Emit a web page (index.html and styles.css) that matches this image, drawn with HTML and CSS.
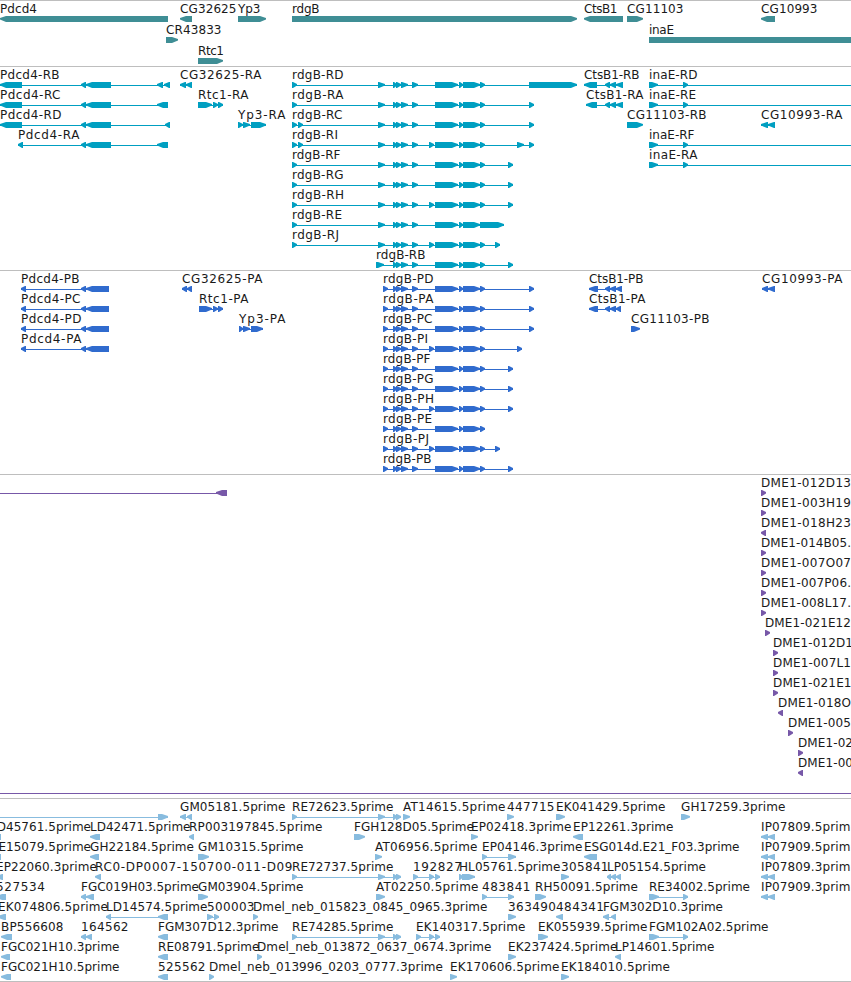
FILE: index.html
```html
<!DOCTYPE HTML>
<html>

<head>
	<title>Genome Tracks</title>
	<meta http-equiv="Content-Type" content="text/html; charset=UTF-8">
	<link rel="stylesheet" href="styles.css">
</head>

<body>

	<div class="browser">
		<svg class="track genes" id="genes"></svg>
		<svg class="track transcripts" id="transcripts"></svg>
		<svg class="track proteins" id="proteins"></svg>
		<svg class="track clones" id="clones"></svg>
		<svg class="track ests" id="ests"></svg>
	</div>

	<script type="text/javascript" src="tracks.js"></script>

</body>

</html>
```

FILE: styles.css
```css
body {
	margin: 0;
	background-color: white;
	overflow: hidden;
}

.browser {
	display: flex;
	flex-direction: column;
	width: 851px;
	border-bottom: 1px solid #bebebe;
}

.track {
	display: block;
	box-sizing: border-box;
	width: 100%;
	border-top: 1px solid #bebebe;
	overflow: hidden;
}

.genes { height: 66px; color: #3f8e95; }
.transcripts { height: 204px; color: #009fc1; }
.proteins { height: 204px; color: #306bce; }
.clones { height: 324px; color: #7758a8; }
.ests { height: 183px; color: #88bcdf; }

.label {
	font-family: "DejaVu Sans", sans-serif;
	font-size: 12px;
	fill: #1a1a1a;
}

.exon { fill: currentColor; }

.intron {
	fill: currentColor;
	shape-rendering: crispEdges;
}
```

FILE: tracks.js
```js
var SVG = 'http://www.w3.org/2000/svg';
var HEAD = 6;

function AddShape(svg, name, cls, attrs) {
	var el = document.createElementNS(SVG, name);
	el.setAttribute('class', cls);
	for (var key in attrs) el.setAttribute(key, attrs[key]);
	svg.appendChild(el);
	return el;
}

// box with an arrow head on the strand side
function DrawExon(svg, start, end, y, strand) {
	var head = Math.min(HEAD, end - start - 1);
	var from = strand == '+' ? start : end;
	var tip = strand == '+' ? end : start;
	var neck = strand == '+' ? end - head : start + head;
	AddShape(svg, 'polygon', 'exon', {
		points: [from, y, neck, y, tip, y + 2, tip, y + 3.6, neck, y + 6, from, y + 6].join(' ')
	});
}

// item: row, label, label end, strand, exons, [intron start, intron end]
// the label starts where the first exon does
function DrawTrack(id, pitch, items) {
	var svg = document.getElementById(id);
	items.forEach(function (item) {
		var top = item[0] * pitch - 1;
		var exons = item[4];
		var span = item[5] || (exons.length > 1 ? [exons[0][0], exons[exons.length - 1][1]] : null);
		if (span) {
			AddShape(svg, 'rect', 'intron', { x: span[0], y: top + 19, width: span[1] - span[0], height: 1 });
		}
		exons.forEach(function (e) {
			DrawExon(svg, e[0], e[1], top + 16, item[3]);
		});
		if (item[1]) {
			AddShape(svg, 'text', 'label', {
				x: exons[0][0], y: top + 13, textLength: item[2] - exons[0][0]
			}).textContent = item[1];
		}
	});
}

DrawTrack('genes', 21, [
	[0, 'Pdcd4', 37, '-', [[0, 168]]],
	[0, 'CG32625', 236.5, '-', [[180, 192]]],
	[0, 'Yp3', 260.5, '+', [[238, 266]]],
	[0, 'rdgB', 319.5, '+', [[292, 577]]],
	[0, 'CtsB1', 617.5, '-', [[584, 623]]],
	[0, 'CG11103', 683.5, '+', [[627, 643]]],
	[0, 'CG10993', 817.5, '-', [[761, 775]]],
	[1, 'CR43833', 221.5, '+', [[166, 178]]],
	[1, 'inaE', 674, '+', [[649, 900]]],
	[2, 'Rtc1', 224, '+', [[198, 223]]]
]);

var mid = [[393, 397], [396, 401], [401, 408], [412, 418]];
var core = [[435, 458], [459, 463], [463, 480]];
var tail = [[480, 485]];
var alt = [[429, 434]];
var utr = [[292, 297]];
var utr2 = [[298, 303]];
var lead = [[378, 385]].concat(mid);
var cds = [[383, 388]].concat(mid);

DrawTrack('transcripts', 20, [
	[0, 'Pdcd4-RB', 59.5, '-', [[0, 22], [81, 86], [86, 111], [157, 163], [164, 170]]],
	[1, 'Pdcd4-RC', 60.5, '-', [[0, 22], [81, 86], [86, 111], [157, 168]]],
	[2, 'Pdcd4-RD', 61.5, '-', [[0, 22], [81, 86], [86, 111], [165, 170]]],
	[3, 'Pdcd4-RA', 79.5, '-', [[18, 23], [81, 86], [86, 111], [157, 168]]],
	[0, 'CG32625-RA', 261.5, '-', [[180, 186], [186, 192]]],
	[1, 'Rtc1-RA', 248.5, '+', [[198, 212], [213, 218], [218, 223]]],
	[2, 'Yp3-RA', 285.5, '+', [[238, 243], [243, 250], [251, 266]]],
	[0, 'rdgB-RD', 343.5, '+', utr.concat(lead, core, tail, [[529, 577]])],
	[1, 'rdgB-RA', 343.5, '+', utr.concat(lead, core, tail, [[529, 534]])],
	[2, 'rdgB-RC', 342.5, '+', utr.concat(utr2, lead, core, tail, [[529, 534]])],
	[3, 'rdgB-RI', 338, '+', utr.concat(utr2, lead, alt, core, tail, [[517, 524], [529, 534]])],
	[4, 'rdgB-RF', 340.5, '+', utr.concat(lead, core, tail, [[508, 513]])],
	[5, 'rdgB-RG', 343.5, '+', utr.concat(lead, core, tail, [[508, 513]])],
	[6, 'rdgB-RH', 344, '+', utr.concat(lead, alt, core, tail, [[508, 513]])],
	[7, 'rdgB-RE', 342, '+', utr.concat(lead, core, [[480, 504]])],
	[8, 'rdgB-RJ', 339, '+', utr.concat(lead, alt, core, tail, [[495, 500]])],
	[9, 'rdgB-RB', 425.5, '+', [[376, 384]].concat(mid, core, tail, [[508, 513]])],
	[0, 'CtsB1-RB', 639.5, '-', [[584, 597], [605, 610], [610, 616], [616, 623]]],
	[1, 'CtsB1-RA', 643.5, '-', [[586, 597], [605, 610], [610, 616], [616, 623]]],
	[0, 'inaE-RD', 697.5, '+', [[649, 658], [683, 688]], [649, 851]],
	[1, 'inaE-RE', 696, '+', [[649, 658], [683, 688]], [649, 851]],
	[3, 'inaE-RF', 694.5, '+', [[649, 658], [683, 688]], [649, 851]],
	[4, 'inaE-RA', 697.5, '+', [[649, 658], [683, 688]], [649, 851]],
	[2, 'CG11103-RB', 706.5, '+', [[627, 643]]],
	[2, 'CG10993-RA', 842.5, '-', [[761, 768], [768, 775]]]
]);

DrawTrack('proteins', 20, [
	[0, 'Pdcd4-PB', 79.5, '-', [[21, 26], [81, 86], [86, 109]]],
	[1, 'Pdcd4-PC', 80.5, '-', [[21, 26], [81, 86], [86, 109]]],
	[2, 'Pdcd4-PD', 81.5, '-', [[21, 26], [81, 86], [86, 109]]],
	[3, 'Pdcd4-PA', 81.5, '-', [[21, 26], [81, 86], [86, 109]]],
	[0, 'CG32625-PA', 262.5, '-', [[182, 187], [187, 192]]],
	[1, 'Rtc1-PA', 248.5, '+', [[199, 212], [213, 218], [218, 223]]],
	[2, 'Yp3-PA', 285.5, '+', [[239, 243], [243, 250], [251, 263]]],
	[0, 'rdgB-PD', 433.5, '+', cds.concat(core, tail, [[529, 534]])],
	[1, 'rdgB-PA', 433.5, '+', cds.concat(core, tail, [[529, 534]])],
	[2, 'rdgB-PC', 432.5, '+', cds.concat(core, tail, [[529, 534]])],
	[3, 'rdgB-PI', 428, '+', cds.concat(alt, core, tail, [[517, 522]])],
	[4, 'rdgB-PF', 430.5, '+', cds.concat(core, tail, [[508, 513]])],
	[5, 'rdgB-PG', 433.5, '+', cds.concat(core, tail, [[508, 513]])],
	[6, 'rdgB-PH', 434, '+', cds.concat(alt, core, tail, [[508, 513]])],
	[7, 'rdgB-PE', 432, '+', cds.concat(core, tail)],
	[8, 'rdgB-PJ', 429, '+', cds.concat(alt, core, tail, [[495, 500]])],
	[9, 'rdgB-PB', 431.5, '+', cds.concat(core, tail, [[508, 513]])],
	[0, 'CtsB1-PB', 643.5, '-', [[589, 598], [605, 610], [610, 616], [616, 622]]],
	[1, 'CtsB1-PA', 645.5, '-', [[589, 598], [605, 610], [610, 616], [616, 621]]],
	[2, 'CG11103-PB', 709.5, '+', [[631, 640]]],
	[0, 'CG10993-PA', 842.5, '-', [[762, 768], [768, 775]]]
]);

DrawTrack('clones', 20, [
	[0, '', 0, '-', [[216, 227]], [0, 227]],
	[0, 'DME1-012D13', 851, '+', [[761, 766]]],
	[1, 'DME1-003H19', 851, '+', [[761, 766]]],
	[2, 'DME1-018H23', 851, '-', [[761, 766]]],
	[3, 'DME1-014B05.', 851, '+', [[761, 766]]],
	[4, 'DME1-007O07', 851, '+', [[761, 766]]],
	[5, 'DME1-007P06.', 851, '+', [[761, 766]]],
	[6, 'DME1-008L17.', 851, '+', [[761, 766]]],
	[7, 'DME1-021E12', 851, '+', [[765, 770]]],
	[8, 'DME1-012D1', 853, '+', [[773, 778]]],
	[9, 'DME1-007L1', 851, '+', [[773, 778]]],
	[10, 'DME1-021E1', 851.5, '+', [[773, 778]]],
	[11, 'DME1-018O', 851, '-', [[778, 783]]],
	[12, 'DME1-005', 851, '+', [[788, 793]]],
	[13, 'DME1-02', 853, '+', [[798, 803]]],
	[14, 'DME1-00', 853, '-', [[798, 803]]],
	[15, '', 0, '+', [], [0, 851]]
]);

DrawTrack('ests', 20, [
	[0, '', 0, '+', [[158, 168]], [0, 168]],
	[0, 'GM05181.5prime', 285.5, '-', [[180, 186], [187, 192]]],
	[0, 'RE72623.5prime', 393.5, '+', [[292, 297], [378, 385], [393, 397], [396, 401]]],
	[0, 'AT14615.5prime', 505.5, '+', [[403, 410]]],
	[0, '447715', 554.5, '+', [[507, 514]]],
	[0, 'EK041429.5prime', 665.5, '+', [[556, 565]]],
	[0, 'GH17259.3prime', 785.5, '+', [[681, 690]]],
	[1, 'LD45761.5prime', 91, '-', [[-10, 1]]],
	[1, 'LD42471.5prime', 190.5, '-', [[90, 100]]],
	[1, 'RP003197845.5prime', 322.5, '-', [[189, 194]]],
	[1, 'FGH128D05.5prime', 474, '+', [[354, 365]]],
	[1, 'EP02418.3prime', 571.5, '+', [[471, 478]]],
	[1, 'EP12261.3prime', 673.5, '-', [[573, 583]]],
	[1, 'IP07809.5prim', 850.5, '-', [[761, 768], [768, 775]]],
	[2, 'RE15079.5prime', 91, '-', [[-10, 1]]],
	[2, 'GH22184.5prime', 194, '-', [[90, 99]]],
	[2, 'GM10315.5prime', 303.5, '+', [[198, 209]]],
	[2, 'AT06956.5prime', 477.5, '+', [[375, 382]]],
	[2, 'EP04146.3prime', 582.5, '+', [[482, 487], [508, 516]]],
	[2, 'ESG014d.E21_F03.3prime', 739.5, '-', [[584, 597]]],
	[2, 'IP07909.5prim', 850.5, '-', [[761, 768], [768, 775]]],
	[3, 'EP22060.3prime', 97, '-', [[-4, 3]]],
	[3, 'RC0-DP0007-150700-011-D09', 292.5, '-', [[95, 101]]],
	[3, 'RE72737.5prime', 393.5, '+', [[292, 297], [378, 385], [393, 397], [396, 401]]],
	[3, '192827', 462, '+', [[413, 418], [429, 434], [435, 440]]],
	[3, 'HL05761.5prime', 560.5, '+', [[459, 463], [462, 475]]],
	[3, '305841', 608.5, '+', [[561, 569]]],
	[3, 'LP05154.5prime', 706, '-', [[607, 611], [611, 616], [616, 621]]],
	[3, 'IP07809.3prim', 850.5, '-', [[761, 768], [768, 775]]],
	[4, '527534', 45, '-', [[-4, 6]]],
	[4, 'FGC019H03.5prime', 199, '-', [[81, 86], [86, 94]]],
	[4, 'GM03904.5prime', 303.5, '+', [[198, 208]]],
	[4, 'AT02250.5prime', 478.5, '+', [[376, 385]]],
	[4, '483841', 530.5, '+', [[482, 487], [508, 514]]],
	[4, 'RH50091.5prime', 638, '+', [[535, 546]]],
	[4, 'RE34002.5prime', 750, '+', [[649, 659], [683, 688]]],
	[4, 'IP07909.3prim', 850.5, '-', [[761, 768], [768, 775]]],
	[5, 'EK074806.5prime', 108, '-', [[-2, 6]]],
	[5, 'LD14574.5prime', 207.5, '-', [[106, 111], [158, 168]]],
	[5, '500003', 254.5, '+', [[207, 213], [214, 219]]],
	[5, 'Dmel_neb_015823_0845_0965.3prime', 487.5, '+', [[253, 258]]],
	[5, '363490', 556, '+', [[508, 516]]],
	[5, '484341', 604, '-', [[556, 563]]],
	[5, 'FGM302D10.3prime', 723, '-', [[603, 609], [611, 616]]],
	[6, 'BP556608', 63.5, '-', [[1, 12]]],
	[6, '164562', 128.5, '-', [[81, 86], [86, 92]]],
	[6, 'FGM307D12.3prime', 278.5, '-', [[158, 168]]],
	[6, 'RE74285.5prime', 393.5, '+', [[292, 297], [378, 385], [393, 397], [396, 401]]],
	[6, 'EK140317.5prime', 525.5, '+', [[416, 421], [429, 434], [435, 440]]],
	[6, 'EK055939.5prime', 647.5, '+', [[538, 548]]],
	[6, 'FGM102A02.5prime', 768.5, '+', [[649, 659], [683, 688]]],
	[7, 'FGC021H10.3prime', 119.5, '-', [[1, 10]]],
	[7, 'RE08791.5prime', 259.5, '-', [[158, 168]]],
	[7, 'Dmel_neb_013872_0637_0674.3prime', 491.5, '+', [[257, 262]]],
	[7, 'EK237424.5prime', 617.5, '+', [[508, 516]]],
	[7, 'LP14601.5prime', 714.5, '-', [[615, 621]]],
	[8, 'FGC021H10.5prime', 119.5, '-', [[1, 11]]],
	[8, '525562', 205.5, '-', [[158, 168]]],
	[8, 'Dmel_neb_013996_0203_0777.3prime', 443, '+', [[209, 214]]],
	[8, 'EK170606.5prime', 559.5, '+', [[450, 457]]],
	[8, 'EK184010.5prime', 670, '+', [[561, 569]]]
]);
```
